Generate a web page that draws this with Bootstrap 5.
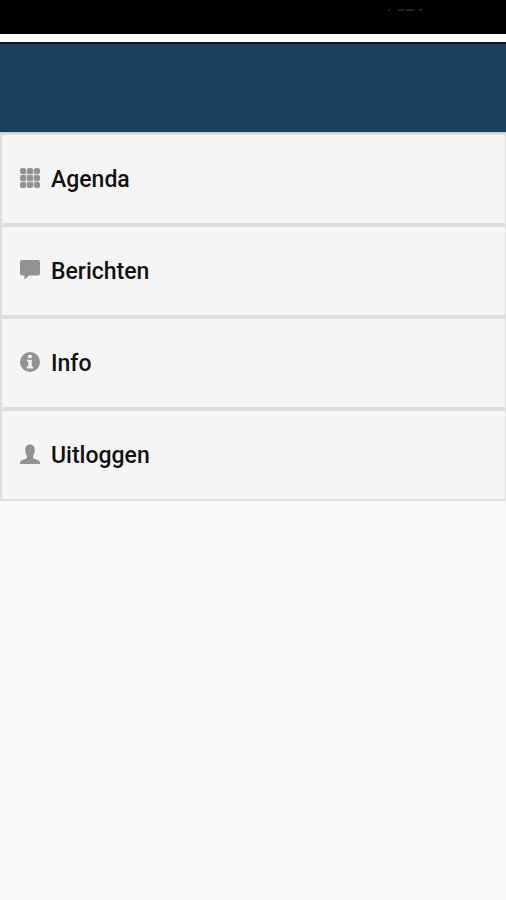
<!DOCTYPE html>
<html lang="nl">
<head>
<meta charset="utf-8">
<meta name="viewport" content="width=device-width, initial-scale=1">
<title>Menu</title>
<link href="https://cdn.jsdelivr.net/npm/bootstrap@5.3.0/dist/css/bootstrap.min.css" rel="stylesheet">
<style>
body { background: #f9f9f9; font-family: Roboto, "Liberation Sans", sans-serif; }
.status-strip { height: 34px; background: #000; padding-left: 387px; padding-top: 9px; }
.status-strip svg { display: block; }
.app-header { height: 91px; margin-top: 8px; background: #1d3f5b; border-top: 2px solid #08183f; border-bottom: 1px solid #b5cfdf; }
.top-area { background: #fff; }
.menu-item { height: 92px; padding: 2px 18px 0; gap: 11px; background: #f5f5f5; border: 2px solid #dedede; border-right-width: 1px; color: #111; font-size: 23px; line-height: 28px; font-weight: 500; }
.menu-item:hover { color: #111; background: #f0f0f0; }
.menu-item svg { width: 20px; height: 20px; margin-bottom: 4px; fill: #929292; flex: none; }
</style>
</head>
<body>
<header class="top-area d-flow-root">
  <div class="status-strip">
    <svg width="38" height="3" viewBox="0 0 38 3" aria-hidden="true"><path d="M1 1h2M11 1h6M19 1h8M32 1h3" stroke="#262626" stroke-width="2"/></svg>
  </div>
  <div class="app-header"></div>
</header>
<nav aria-label="Menu" class="d-flex flex-column">
  <a href="#agenda" class="menu-item d-flex align-items-center text-decoration-none">
    <svg viewBox="0 0 20 20" aria-hidden="true"><path fill="#d4d4d4" d="M1 1h18v18H1z"/><rect x="0" y="0" width="6" height="6" rx="2"/><rect x="7" y="0" width="6" height="6" rx="2"/><rect x="14" y="0" width="6" height="6" rx="2"/><rect x="0" y="7" width="6" height="6" rx="2"/><rect x="7" y="7" width="6" height="6" rx="2"/><rect x="14" y="7" width="6" height="6" rx="2"/><rect x="0" y="14" width="6" height="6" rx="2"/><rect x="7" y="14" width="6" height="6" rx="2"/><rect x="14" y="14" width="6" height="6" rx="2"/></svg>
    <span>Agenda</span>
  </a>
  <a href="#berichten" class="menu-item d-flex align-items-center text-decoration-none">
    <svg viewBox="0 0 20 20" aria-hidden="true"><path d="M2 0H18Q20 0 20 2V13.500Q20 15.500 18 15.500H9L4.500 19.500V15.500H2Q0 15.500 0 13.500V2Q0 0 2 0Z"/></svg>
    <span>Berichten</span>
  </a>
  <a href="#info" class="menu-item d-flex align-items-center text-decoration-none">
    <svg viewBox="0 0 20 20" aria-hidden="true"><circle cx="10" cy="10" r="10"/><path d="M8.200 3h3.500v3H8.200zM7 7.700h4.800v6.700H13.200v2H6.800v-2h1.500V9.600H7z" fill="#f5f5f5"/></svg>
    <span>Info</span>
  </a>
  <a href="#uitloggen" class="menu-item d-flex align-items-center text-decoration-none">
    <svg viewBox="0 0 20 20" aria-hidden="true"><path d="M10 0.500C13 0.500 14.800 2.700 14.800 5.500C14.800 8.500 14.200 10.500 13 11.800V13.200C13 14 13.300 14.300 14.200 14.700L18 16.200C19.400 16.800 20 17.600 20 19V20H0V19C0 17.600 0.600 16.800 2 16.200L5.800 14.700C6.700 14.300 7 14 7 13.200V11.800C5.800 10.500 5.200 8.500 5.200 5.500C5.200 2.700 7 0.500 10 0.500Z"/></svg>
    <span>Uitloggen</span>
  </a>
</nav>
<script src="https://cdn.jsdelivr.net/npm/bootstrap@5.3.0/dist/js/bootstrap.bundle.min.js"></script>
</body>
</html>
